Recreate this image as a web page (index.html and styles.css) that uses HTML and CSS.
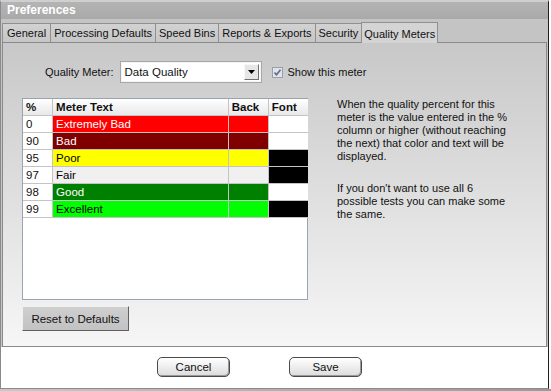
FILE: index.html
```html
<!DOCTYPE html>
<html lang="en">
<head>
  <meta charset="UTF-8">
  <title>Preferences</title>
  <link rel="stylesheet" href="styles.css">
</head>
<body>

  <div class="window">
    <div class="titlebar">Preferences</div>

    <div class="tabs">
      <div class="tab">General</div>
      <div class="tab">Processing Defaults</div>
      <div class="tab">Speed Bins</div>
      <div class="tab">Reports &amp; Exports</div>
      <div class="tab">Security</div>
      <div class="tab active">Quality Meters</div>
    </div>

    <div class="panel">
      <div class="meter-row">
        <span class="label">Quality Meter:</span>
        <div class="select">
          <span>Data Quality</span>
          <span class="select-btn">
            <svg width="7" height="4" viewBox="0 0 7 4"><path d="M0 0h7L3.5 4z" fill="#000"/></svg>
          </span>
        </div>
        <label class="check">
          <svg width="11" height="11" viewBox="0 0 11 11">
            <rect x="0.5" y="0.5" width="10" height="10" fill="#e2e3e8" stroke="#9a9fab"/>
            <path d="M2.5 5.5l2 2.2 4-5" fill="none" stroke="#5a6890" stroke-width="1.6"/>
          </svg>
          Show this meter
        </label>
      </div>

      <div class="main">
        <div class="grid-box">
          <table class="grid">
            <thead>
              <tr>
                <th class="c-pct">%</th>
                <th class="c-text">Meter Text</th>
                <th class="c-back">Back</th>
                <th class="c-font">Font</th>
              </tr>
            </thead>
            <tbody id="meter-list"></tbody>
          </table>
        </div>

        <div class="help">
          <p>When the quality percent for this meter is the value entered in the % column or higher (without reaching the next) that color and text will be displayed.</p>
          <p>If you don't want to use all 6 possible tests you can make some the same.</p>
        </div>
      </div>

      <button class="reset-btn">Reset to Defaults</button>
    </div>

    <div class="footer">
      <button class="round-btn">Cancel</button>
      <button class="round-btn">Save</button>
    </div>
  </div>
  <div class="under"></div>

  <script>
    const meters = [
      { pct: 0, text: "Extremely Bad", back: "#ff0000", font: "#ffffff" },
      { pct: 90, text: "Bad", back: "#800000", font: "#ffffff" },
      { pct: 95, text: "Poor", back: "#ffff00", font: "#000000" },
      { pct: 97, text: "Fair", back: "#f0f0f0", font: "#000000" },
      { pct: 98, text: "Good", back: "#008000", font: "#ffffff" },
      { pct: 99, text: "Excellent", back: "#00ff00", font: "#000000" }
    ];

    const list = document.getElementById('meter-list');
    meters.forEach(m => {
      const row = document.createElement('tr');
      row.innerHTML = `
        <td>${m.pct}</td>
        <td style="background:${m.back};color:${m.font}">${m.text}</td>
        <td style="background:${m.back}"></td>
        <td style="background:${m.font}"></td>
      `;
      list.appendChild(row);
    });
  </script>

</body>
</html>
```

FILE: styles.css
```css
body {
  margin: 0;
  padding: 0;
  background: #ffffff;
  font-family: 'Liberation Sans', Arial, sans-serif;
  font-size: 11px;
  color: #111;
}

.window {
  width: 547px;
  height: 386px;
  border: 1px solid #8a8a8a;
  border-right-color: #202020;
  border-top: 2px solid #cfcfcf;
  background: #c6c6c6;
  display: flex;
  flex-direction: column;
}

.titlebar {
  height: 17px;
  line-height: 17px;
  padding-left: 6px;
  background: linear-gradient(to bottom, #b4b4b4, #a9a9a9);
  color: #fff;
  font-weight: bold;
  font-size: 12px;
}

.tabs {
  display: flex;
  align-items: flex-end;
  height: 23px;
  padding-left: 1px;
  background: #c4c4c4;
}

.tab {
  height: 18px;
  line-height: 18px;
  padding: 0 3px;
  border: 1px solid #909090;
  border-bottom: none;
  margin-right: -1px;
  background: linear-gradient(to bottom, #d2d2d2, #c6c6c6);
  white-space: nowrap;
}

.tab:first-child {
  padding: 0 4px;
}

.tab.active {
  height: 20px;
  line-height: 22px;
  margin-bottom: -1px;
  padding: 0 2px;
  background: #d4d4d4;
  position: relative;
  z-index: 1;
}

.panel {
  height: 305px;
  box-sizing: border-box;
  margin: 0 1px;
  border: 1px solid #8a8a8a;
  background: linear-gradient(to bottom, #c8c8c8, #f6f6f6);
  padding-top: 18px;
}

.meter-row {
  display: flex;
  align-items: center;
  height: 22px;
  padding-left: 42px;
}

.label {
  margin-right: 8px;
}

.select {
  width: 140px;
  height: 20px;
  box-sizing: border-box;
  border: 1px solid #f4f4f4;
  outline: 1px solid #a8a8a8;
  background: #fff;
  display: flex;
  align-items: center;
  justify-content: space-between;
  padding-left: 2px;
  font-size: 11.5px;
}

.select-btn {
  width: 15px;
  height: 16px;
  box-sizing: border-box;
  border: 1px solid;
  border-color: #f8f8f8 #707070 #707070 #f8f8f8;
  background: #e6e6e6;
  display: flex;
  align-items: center;
  justify-content: center;
  margin-right: 1px;
}

.check {
  display: flex;
  align-items: center;
  gap: 4px;
  margin-left: 11px;
}

.main {
  display: flex;
  margin-top: 15px;
  padding-left: 19px;
}

.grid-box {
  width: 286px;
  height: 202px;
  box-sizing: border-box;
  border: 1px solid #9aa4b0;
  background: #fff;
}

.grid {
  border-collapse: collapse;
  table-layout: fixed;
  width: 285px;
}

.grid th,
.grid td {
  height: 16px;
  padding: 0 3px;
  border: 1px solid #c4c4c4;
  text-align: left;
  white-space: nowrap;
  font-size: 11.5px;
}

.grid th {
  background: linear-gradient(to bottom, #ffffff, #e8e8e8);
  font-weight: bold;
  border-top: none;
}

.grid th:first-child,
.grid td:first-child {
  border-left: none;
}

.grid th:last-child,
.grid td:last-child {
  border-right: none;
}

.c-pct { width: 23px; }
.c-text { width: 168px; }
.c-back { width: 33px; }
.c-font { width: 33px; }

.help {
  margin-left: 29px;
  width: 172px;
  line-height: 13px;
  font-size: 11px;
}

.help p {
  margin: 0 0 19px;
}

.reset-btn {
  display: block;
  margin: 6px 0 0 19px;
  width: 107px;
  height: 25px;
  font-family: inherit;
  font-size: 11.5px;
  color: #111;
  background: linear-gradient(to bottom, #cfcfcf, #c2c2c2);
  border: 1px solid;
  border-color: #f0f0f0 #606060 #606060 #f0f0f0;
}

.footer {
  flex: 1;
  background: #fff;
  display: flex;
  align-items: flex-start;
  padding: 10px 0 0 156px;
  gap: 59px;
}

.round-btn {
  width: 73px;
  height: 20px;
  font-family: inherit;
  font-size: 11.5px;
  color: #111;
  border: 1px solid #4a4a4a;
  border-radius: 5px;
  background: linear-gradient(to bottom, #ffffff, #dcdcdc);
  box-shadow: inset -1px -1px 0 #9a9a9a;
}

.under {
  height: 3px;
  background: linear-gradient(to right, #c8c8c8, #9a9a9a);
}
```
